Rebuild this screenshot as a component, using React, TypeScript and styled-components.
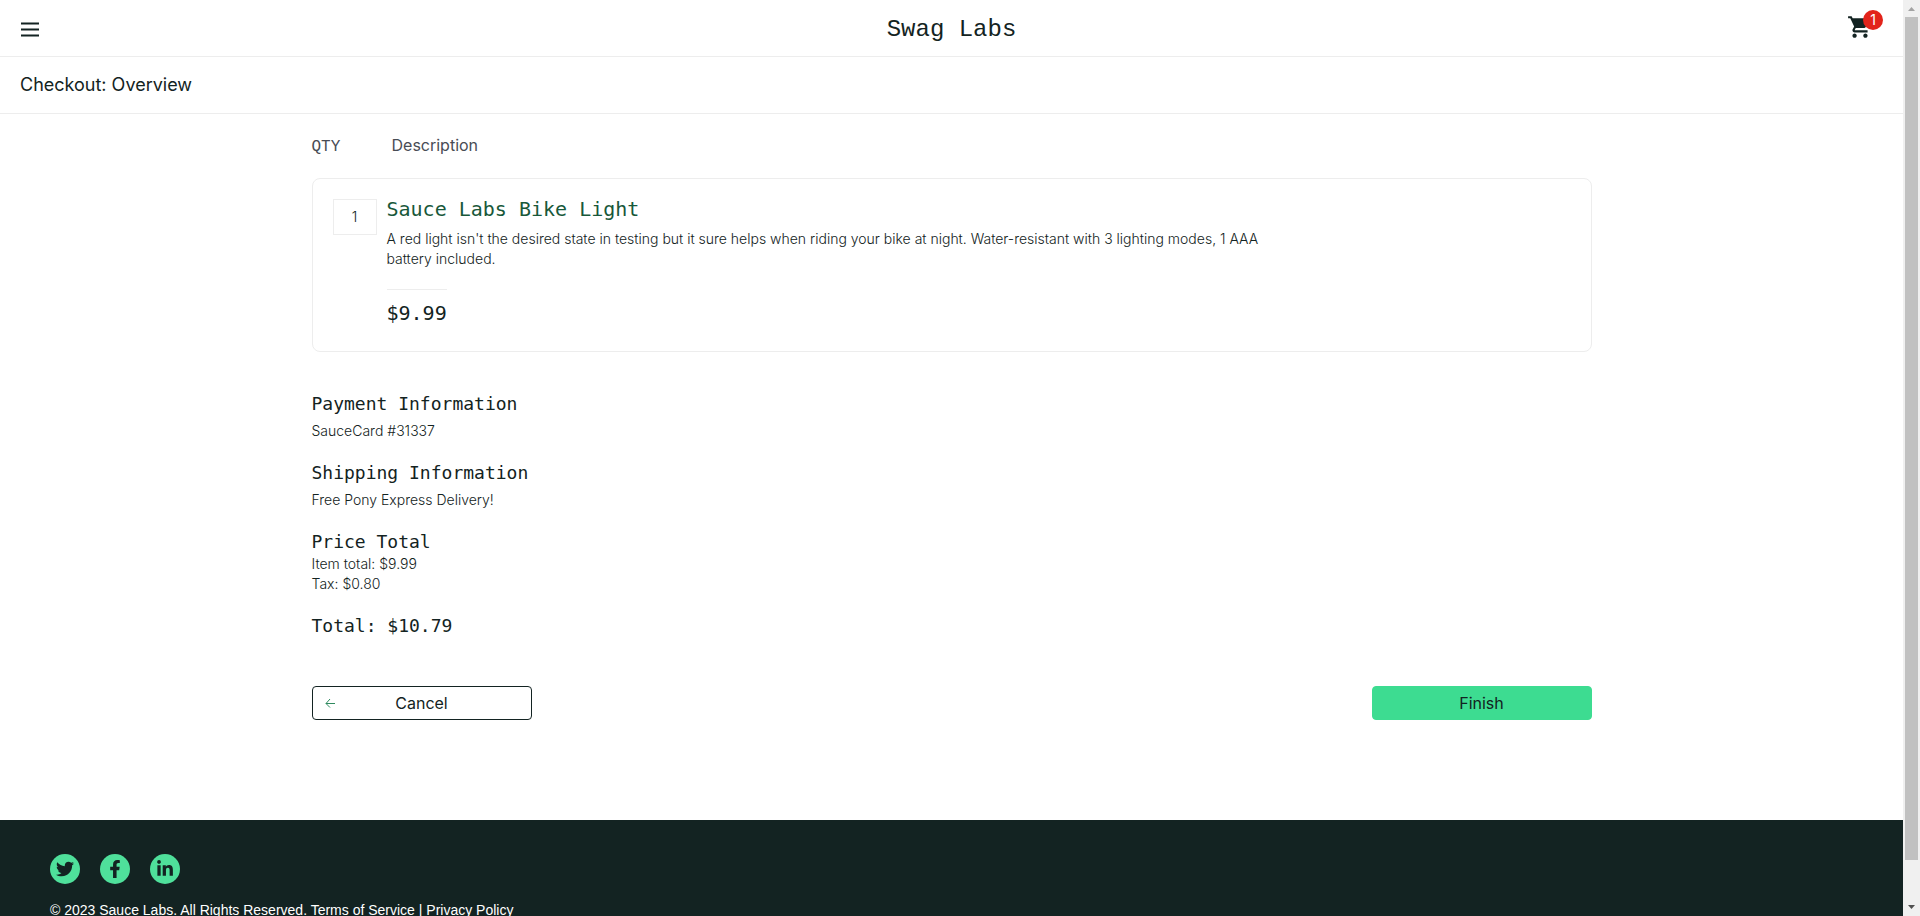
import React from 'react';
import styled, { createGlobalStyle } from 'styled-components';
import { MdShoppingCart } from 'react-icons/md';
import { FaTwitter, FaFacebookF, FaLinkedinIn } from 'react-icons/fa';

const ink = '#132322';
const line = '#ededed';
const sans = "Inter, 'Liberation Sans', sans-serif";
const mono = "'DejaVu Sans Mono', 'Liberation Mono', monospace";
const monoLight = "'Liberation Mono', 'DejaVu Sans Mono', monospace";

const GlobalStyle = createGlobalStyle`
  *, *::before, *::after { box-sizing: border-box; }
  body { margin: 0; background: #fff; color: ${ink}; font-family: ${sans}; }
  h1, h2, h3, p, dl, dd, dt { margin: 0; font-weight: 400; }
`;

const Viewport = styled.div`
  display: grid;
  grid-template-columns: minmax(0, 1fr) 17px;
  height: 100vh;
`;

const Page = styled.div`
  overflow: hidden;
`;

const TopBar = styled.header`
  display: grid;
  grid-template-columns: 1fr auto 1fr;
  align-items: center;
  height: 57px;
  padding: 0 20px;
  border-bottom: 1px solid ${line};
`;

const IconButton = styled.button`
  display: flex;
  padding: 0;
  border: 0;
  background: none;
  color: ${ink};
  cursor: pointer;
`;

const Brand = styled.div`
  padding-top: 3px;
  font: 400 24px/32px ${monoLight};
`;

const CartLink = styled.a`
  position: relative;
  justify-self: end;
  display: flex;
  margin: 0 10px 2px 0;
  color: ${ink};
`;

const CartBadge = styled.span`
  position: absolute;
  top: -4px;
  right: -10px;
  width: 20px;
  height: 20px;
  border-radius: 50%;
  background: #e2231a;
  color: #fff;
  font-size: 14px;
  line-height: 20px;
  text-align: center;
`;

const TitleBar = styled.div`
  display: flex;
  align-items: center;
  height: 57px;
  padding: 0 20px;
  border-bottom: 1px solid ${line};
`;

const Title = styled.h1`
  font-size: 18px;
  line-height: 24px;
`;

const Main = styled.main`
  max-width: 1280px;
  margin: 0 auto;
  padding: 21px 0 100px;
`;

const ListHead = styled.div`
  display: flex;
  align-items: baseline;
  height: 20px;
  margin-bottom: 23px;
  color: #484c55;
  font-size: 16px;
  line-height: 20px;
`;

const QtyLabel = styled.div`
  width: 80px;
  font-family: ${monoLight};
`;

const Card = styled.article`
  display: flex;
  gap: 10px;
  padding: 20px 20px 26px;
  border: 1px solid ${line};
  border-radius: 8px;
`;

const Quantity = styled.div`
  flex: none;
  width: 44px;
  height: 36px;
  border: 1px solid ${line};
  font-size: 14px;
  font-weight: 300;
  line-height: 34px;
  text-align: center;
`;

const Item = styled.div`
  flex: 1;
`;

const ItemName = styled.a`
  display: block;
  color: #18583a;
  font: 400 20px/20px ${mono};
  text-decoration: none;
`;

const Text = styled.p`
  font-size: 14px;
  font-weight: 300;
  line-height: 20px;
`;

const ItemText = styled(Text)`
  max-width: 880px;
  margin: 10px 0 20px;
`;

const Price = styled.div`
  display: inline-block;
  padding-top: 11px;
  border-top: 1px solid ${line};
  font: 400 20px/24px ${mono};
`;

const Summary = styled.section`
  margin-top: 41px;
`;

const Block = styled.div<{ $gap: number }>`
  display: flex;
  flex-direction: column;
  gap: ${p => p.$gap}px;
  margin-bottom: 21px;
`;

const Heading = styled.h2`
  font: 400 18px/22px ${mono};
`;

const Actions = styled.div`
  display: flex;
  justify-content: space-between;
  margin-top: 49px;
`;

const Button = styled.button<{ $primary?: boolean }>`
  display: grid;
  grid-template-columns: 10px 1fr 10px;
  align-items: center;
  width: 220px;
  height: 34px;
  padding: 0 12px;
  border: 1px solid ${p => (p.$primary ? '#3ddc91' : ink)};
  border-radius: 4px;
  background: ${p => (p.$primary ? '#3ddc91' : '#fff')};
  color: ${ink};
  font: 400 16px/20px ${sans};
  cursor: pointer;
`;

const Label = styled.span`
  grid-column: 2;
`;

const Footer = styled.footer`
  padding: 34px 50px 50px;
  background: ${ink};
  color: #fff;
`;

const Social = styled.nav`
  display: flex;
  gap: 20px;
  margin-bottom: 16px;
`;

const SocialLink = styled.a`
  display: flex;
  align-items: center;
  justify-content: center;
  width: 30px;
  height: 30px;
  border-radius: 50%;
  background: #4fe09b;
  color: ${ink};
`;

const Copy = styled.p`
  font: 400 14px/20px 'Liberation Sans', Arial, sans-serif;
`;

const ScrollTrack = styled.div`
  display: flex;
  flex-direction: column;
  align-items: center;
  background: #f0f0f0;
`;

const ScrollThumb = styled.div`
  width: 13px;
  height: 92%;
  background: #c1c1c1;
`;

const ScrollArrow = styled.svg`
  flex: none;
  width: 17px;
  height: 17px;
  &:last-child { margin-top: auto; }
`;

const MenuIcon = () => (
  <svg width="20" height="20" viewBox="0 0 20 20" aria-hidden="true">
    <path d="M1 5.500h18M1 11.500h18M1 17.500h18" stroke="currentColor" strokeWidth="2" />
  </svg>
);

const BackArrow = () => (
  <svg width="10" height="10" viewBox="0 0 10 10" fill="none" stroke="#2f8a5f" aria-hidden="true">
    <path d="M10 5.5H1M5 1L1 5.5L5 9.5" />
  </svg>
);

export default function App() {
  return (
    <>
      <GlobalStyle />
      <Viewport>
        <Page>
          <TopBar>
            <IconButton type="button" aria-label="Open menu"><MenuIcon /></IconButton>
            <Brand>Swag Labs</Brand>
            <CartLink href="#cart" aria-label="Cart">
              <MdShoppingCart size={26} />
              <CartBadge>1</CartBadge>
            </CartLink>
          </TopBar>
          <TitleBar><Title>Checkout: Overview</Title></TitleBar>

          <Main>
            <ListHead>
              <QtyLabel>QTY</QtyLabel>
              <div>Description</div>
            </ListHead>
            <Card>
              <Quantity>1</Quantity>
              <Item>
                <ItemName href="#item">Sauce Labs Bike Light</ItemName>
                <ItemText>
                  A red light isn't the desired state in testing but it sure helps when riding your bike at
                  night. Water-resistant with 3 lighting modes, 1 AAA battery included.
                </ItemText>
                <Price>$9.99</Price>
              </Item>
            </Card>

            <Summary>
              <Block $gap={6}>
                <Heading>Payment Information</Heading>
                <Text>SauceCard #31337</Text>
              </Block>
              <Block $gap={6}>
                <Heading>Shipping Information</Heading>
                <Text>Free Pony Express Delivery!</Text>
              </Block>
              <Block $gap={1}>
                <Heading>Price Total</Heading>
                <div>
                  <Text>Item total: $9.99</Text>
                  <Text>Tax: $0.80</Text>
                </div>
              </Block>
              <Heading>Total: $10.79</Heading>
            </Summary>

            <Actions>
              <Button type="button"><BackArrow /><Label>Cancel</Label></Button>
              <Button type="button" $primary><Label>Finish</Label></Button>
            </Actions>
          </Main>

          <Footer>
            <Social aria-label="Social media">
              <SocialLink href="#twitter" aria-label="Twitter"><FaTwitter size={18} /></SocialLink>
              <SocialLink href="#facebook" aria-label="Facebook"><FaFacebookF size={18} /></SocialLink>
              <SocialLink href="#linkedin" aria-label="LinkedIn"><FaLinkedinIn size={18} /></SocialLink>
            </Social>
            <Copy>© 2023 Sauce Labs. All Rights Reserved. Terms of Service | Privacy Policy</Copy>
          </Footer>
        </Page>
        <ScrollTrack aria-hidden="true">
          <ScrollArrow viewBox="0 0 17 17"><path d="M5 11L8.500 7L12 11z" fill="#a3a3a3" /></ScrollArrow>
          <ScrollThumb />
          <ScrollArrow viewBox="0 0 17 17"><path d="M5 6L8.500 10L12 6z" fill="#505050" /></ScrollArrow>
        </ScrollTrack>
      </Viewport>
    </>
  );
}
